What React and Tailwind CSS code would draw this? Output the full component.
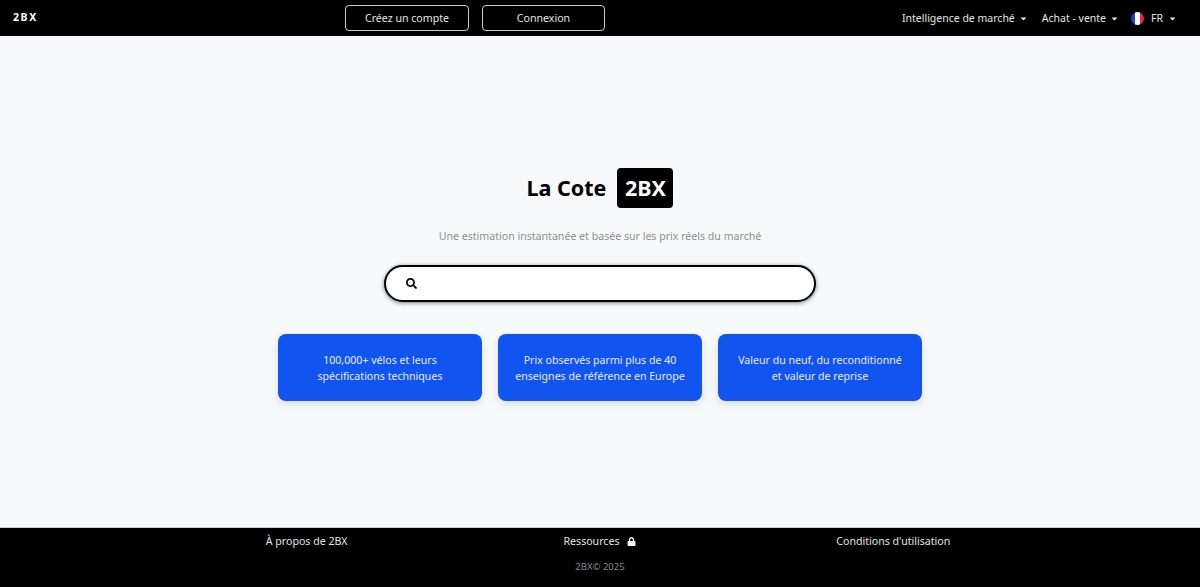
import React from "react";
import { FaSearch, FaLock, FaCaretDown } from "react-icons/fa";

const cards = [
  ["100,000+ vélos et leurs", "spécifications techniques"],
  ["Prix observés parmi plus de 40", "enseignes de référence en Europe"],
  ["Valeur du neuf, du reconditionné", "et valeur de reprise"],
];

const App = () => {
  return (
    <div className="flex flex-col h-[587px] bg-[#f8f9fb] font-['Noto_Sans',sans-serif] overflow-hidden">
      {/* Top Bar */}
      <header className="flex items-center h-9 bg-black text-white shrink-0">
        <div className="w-[345px] pl-[13px] text-[10.5px] font-bold tracking-[1.6px]">2BX</div>
        <div className="flex gap-[13px]">
          <button className="w-[124px] h-[26px] pt-px border border-white/80 rounded text-[10.6px] text-[#e5e5e5]">
            Créez un compte
          </button>
          <button className="w-[123px] h-[26px] pt-px border border-white/80 rounded text-[10.6px] text-[#e5e5e5]">
            Connexion
          </button>
        </div>
        <nav className="flex items-center ml-auto pr-[23px] pt-px text-[10.5px] text-[#e5e5e5]">
          <span>Intelligence de marché</span>
          <FaCaretDown className="ml-1 text-[9px]" />
          <span className="ml-[14px]">Achat - vente</span>
          <FaCaretDown className="ml-1 text-[9px]" />
          <span className="ml-3 w-[13px] h-[13px] rounded-full bg-[linear-gradient(90deg,#1d3fc4_33%,#ffffff_33%,#ffffff_66%,#e5283a_66%)]" />
          <span className="ml-[7px]">FR</span>
          <FaCaretDown className="ml-[5px] text-[9px]" />
        </nav>
      </header>

      {/* Main */}
      <main className="flex-1 flex flex-col items-center pt-[132px]">
        <div className="flex items-center h-10">
          <h1 className="text-[21.5px] font-bold text-black">La Cote</h1>
          <span className="ml-[11px] flex items-center justify-center w-[56px] h-10 bg-black text-white rounded text-[21.5px] font-bold">
            2BX
          </span>
        </div>
        <p className="mt-[19px] text-[10.6px] leading-[18px] text-[#8a8f98]">
          Une estimation instantanée et basée sur les prix réels du marché
        </p>
        <div className="mt-[20px] flex items-center w-[432px] h-[37px] bg-white border-2 border-black rounded-full pl-[20px] shadow-[0_1px_4px_rgba(0,0,0,0.5)]">
          <FaSearch className="text-[11px] text-black" />
        </div>
        <div className="mt-8 flex gap-4">
          {cards.map((lines) => (
            <div
              key={lines[0]}
              className="flex flex-col items-center justify-center w-[204px] h-[67px] bg-[#1254f0] rounded-lg text-[10.6px] leading-4 text-[#e6ecff] shadow-[0_3px_8px_rgba(0,0,0,0.12)]"
            >
              <span>{lines[0]}</span>
              <span>{lines[1]}</span>
            </div>
          ))}
        </div>
      </main>

      {/* Footer */}
      <footer className="h-[60px] shrink-0 bg-black border-t border-[#cfcfcf] flex flex-col items-center text-white">
        <div className="grid grid-cols-3 w-[880px] mt-[5px] text-[10.6px] text-[#e5e5e5] text-center leading-[17px]">
          <span>À propos de 2BX</span>
          <span className="flex items-center justify-center">
            Ressources
            <FaLock className="ml-2 text-[9px] text-white" />
          </span>
          <span>Conditions d'utilisation</span>
        </div>
        <div className="mt-[10px] text-[9.5px] leading-[14px] text-[#8a8a8a]">2BX© 2025</div>
      </footer>
    </div>
  );
};

export default App;
